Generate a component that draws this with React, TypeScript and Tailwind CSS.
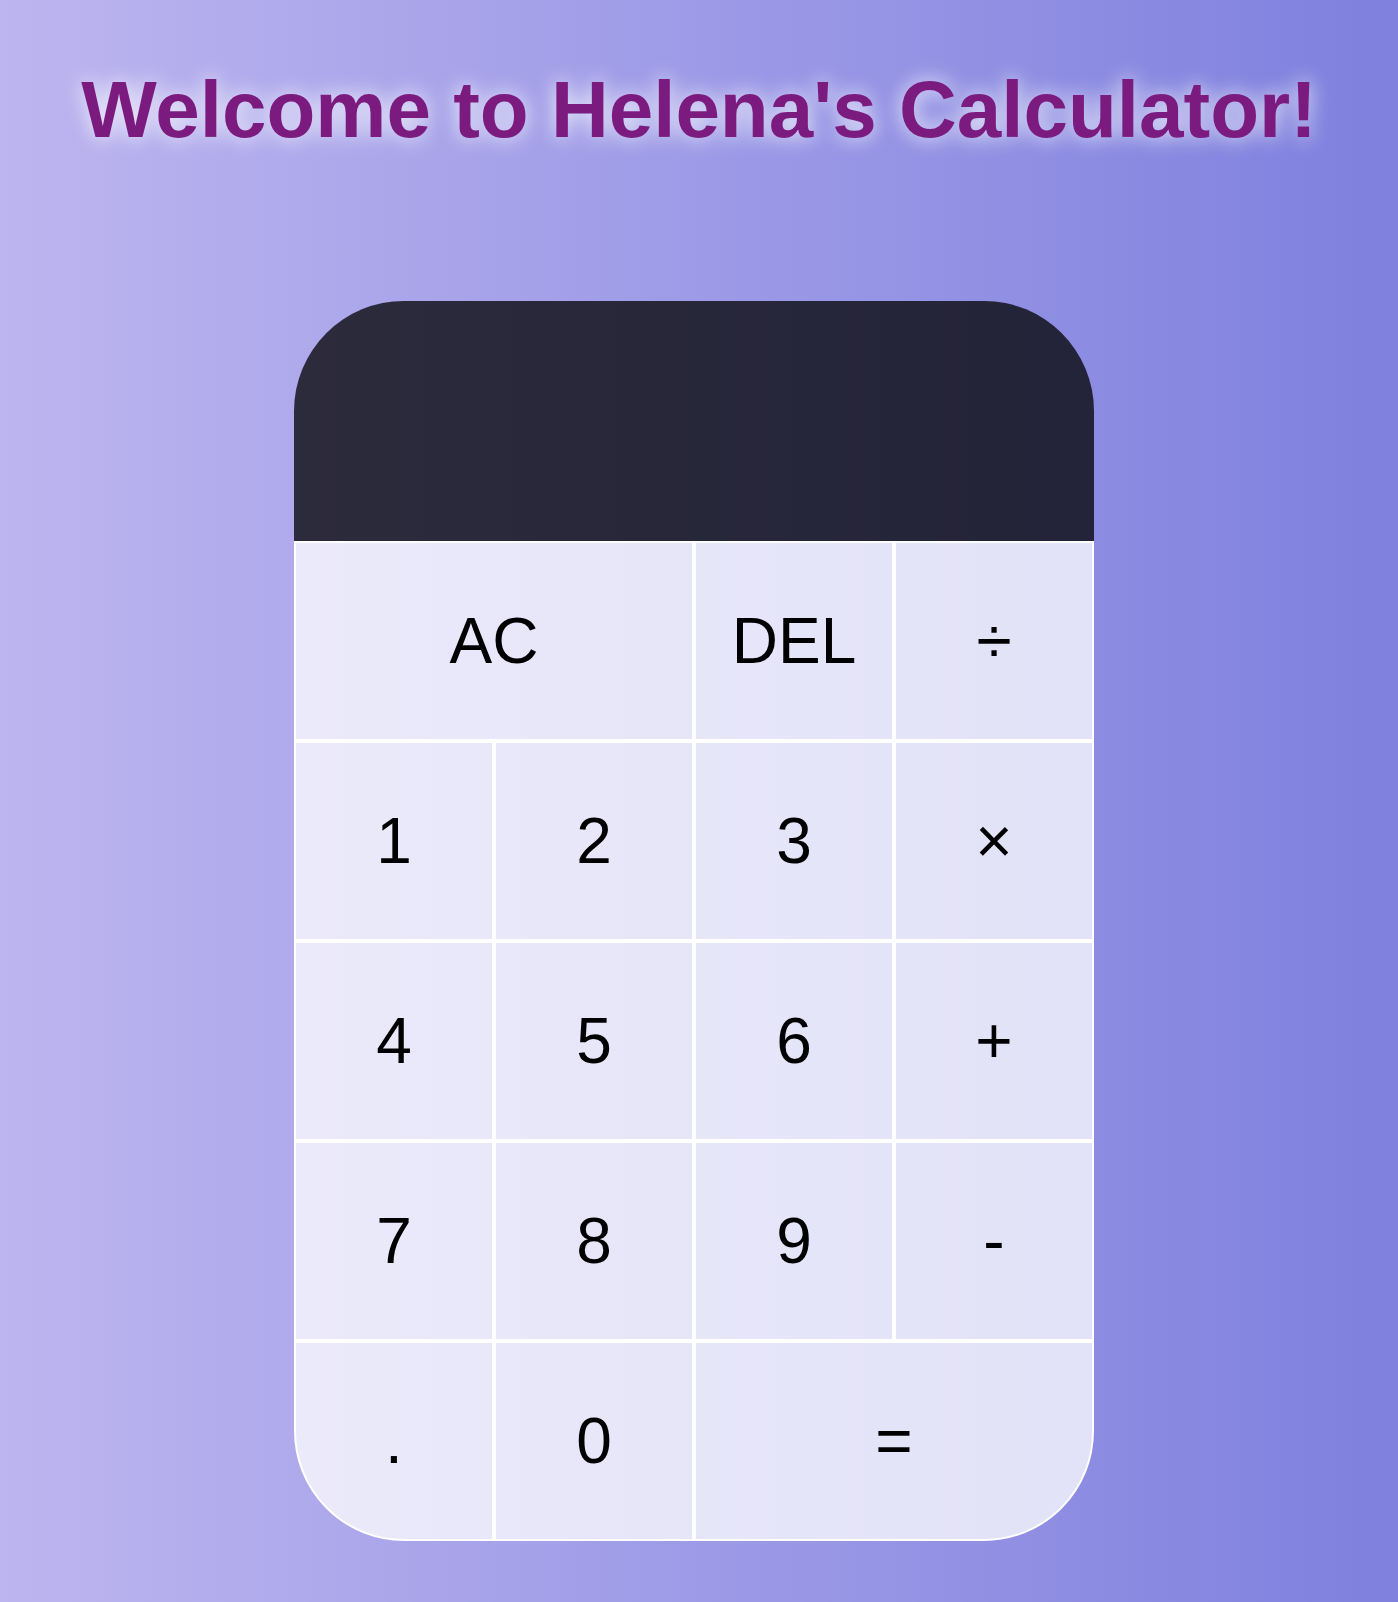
const keys: { label: string; span?: boolean; corner?: "bl" | "br" }[] = [
  { label: "AC", span: true },
  { label: "DEL" },
  { label: "÷" },
  { label: "1" },
  { label: "2" },
  { label: "3" },
  { label: "×" },
  { label: "4" },
  { label: "5" },
  { label: "6" },
  { label: "+" },
  { label: "7" },
  { label: "8" },
  { label: "9" },
  { label: "-" },
  { label: ".", corner: "bl" },
  { label: "0" },
  { label: "=", span: true, corner: "br" },
];

export default function App() {
  return (
    <div className="min-h-[1602px] w-full bg-gradient-to-r from-[#bdb5ef] to-[#7f80de] font-['Liberation_Sans',Arial,sans-serif]">
      <h1 className="pt-[64px] text-center text-[80px] font-bold leading-[92px] text-[#7b1b7f] [text-shadow:0_0_20px_rgba(255,255,255,0.9)]">
        Welcome to Helena's Calculator!
      </h1>

      <div className="mt-[145px] flex justify-center pr-[10px]">
        <div className="grid grid-cols-[repeat(4,200px)] grid-rows-[240px_repeat(5,200px)]">
          {/* output */}
          <div className="col-span-4 rounded-t-[110px] bg-black/75"></div>

          {keys.map((k) => (
            <button
              key={k.label}
              className={
                "flex cursor-pointer items-center justify-center border-2 border-white bg-white/75 text-[64px] leading-none text-black outline-none " +
                (k.span ? "col-span-2 " : "") +
                (k.corner === "bl" ? "rounded-bl-[110px] " : "") +
                (k.corner === "br" ? "rounded-br-[110px] " : "")
              }
            >
              {k.label}
            </button>
          ))}
        </div>
      </div>
    </div>
  );
}
